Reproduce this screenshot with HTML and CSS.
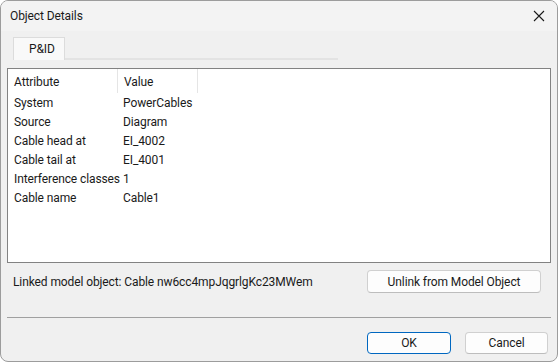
FILE: index.html
```html
<!DOCTYPE html>
<html lang="en">
<head>
    <meta charset="UTF-8">
    <title>Object Details</title>
    <link rel="stylesheet" href="styles.css">
</head>
<body>
    <div class="dialog">
        <div class="title-bar">
            <span class="title">Object Details</span>
            <svg class="close-icon" width="12" height="12" viewBox="0 0 12 12">
                <path d="M1 1 L11 11 M11 1 L1 11" stroke="#1a1a1a" stroke-width="1.1" fill="none"/>
            </svg>
        </div>

        <div class="tab-strip">
            <div class="tab">P&amp;ID</div>
            <div class="tab-line"></div>
        </div>

        <div class="attr-list">
            <div class="attr-row attr-head">
                <div class="col-name">Attribute</div>
                <div class="col-value">Value</div>
            </div>
            <div class="attr-row"><div class="col-name">System</div><div class="col-value">PowerCables</div></div>
            <div class="attr-row"><div class="col-name">Source</div><div class="col-value">Diagram</div></div>
            <div class="attr-row"><div class="col-name">Cable head at</div><div class="col-value">EI_4002</div></div>
            <div class="attr-row"><div class="col-name">Cable tail at</div><div class="col-value">EI_4001</div></div>
            <div class="attr-row"><div class="col-name">Interference classes</div><div class="col-value">1</div></div>
            <div class="attr-row"><div class="col-name">Cable name</div><div class="col-value">Cable1</div></div>
        </div>

        <div class="link-row">
            <span class="link-text">Linked model object: Cable nw6cc4mpJqgrlgKc23MWem</span>
            <button class="btn btn-unlink">Unlink from Model Object</button>
        </div>

        <div class="separator"></div>

        <div class="footer">
            <button class="btn btn-ok">OK</button>
            <button class="btn btn-cancel">Cancel</button>
        </div>
    </div>
</body>
</html>
```

FILE: styles.css
```css
body {
    margin: 0;
    padding: 0;
    background-color: #ffffff;
    font-family: Roboto, "Noto Sans", Arial, sans-serif;
    font-size: 12px;
    letter-spacing: -0.1px;
    color: #1a1a1a;
}

.dialog {
    box-sizing: border-box;
    width: 558px;
    height: 362px;
    display: flex;
    flex-direction: column;
    background-color: #f0f0f0;
    border: 1px solid #9c9c9c;
    border-radius: 8px;
    overflow: hidden;
}

.title-bar {
    height: 30px;
    flex-shrink: 0;
    display: flex;
    align-items: center;
    justify-content: space-between;
    padding: 0 12px 0 9px;
    box-sizing: border-box;
    background-color: #f3f3f3;
}

.title {
    color: #1a1a1a;
}

.close-icon {
    display: block;
}

.tab-strip {
    display: flex;
    align-items: flex-end;
    height: 23px;
    margin-top: 6px;
    padding-left: 12px;
}

.tab {
    box-sizing: border-box;
    width: 52px;
    height: 23px;
    padding-left: 15px;
    line-height: 22px;
    background-color: #f9f9f9;
    border: 1px solid #dcdcdc;
    border-bottom: none;
}

.tab-line {
    width: 273px;
    height: 2px;
    background-color: #e3e3e3;
}

.attr-list {
    box-sizing: border-box;
    height: 195px;
    margin: 8px 6px 0 6px;
    background-color: #ffffff;
    border: 1px solid #828282;
}

.attr-row {
    display: flex;
    height: 19px;
    line-height: 19px;
}

.attr-head {
    height: 24px;
    line-height: 26px;
    margin-bottom: 1px;
}

.col-name {
    width: 103px;
    padding-left: 6px;
    white-space: nowrap;
}

.col-value {
    width: 73px;
    padding-left: 6px;
    white-space: nowrap;
}

.attr-head .col-name,
.attr-head .col-value {
    border-right: 1px solid #e5e5e5;
}

.link-row {
    display: flex;
    align-items: center;
    justify-content: space-between;
    height: 23px;
    margin-top: 7px;
    padding: 0 16px 0 12px;
}

.btn {
    box-sizing: border-box;
    font-family: Roboto, "Noto Sans", Arial, sans-serif;
    font-size: 12px;
    letter-spacing: -0.1px;
    color: #1a1a1a;
    background-color: #fdfdfd;
    border: 1px solid #d0d0d0;
    border-bottom-color: #bdbdbd;
    border-radius: 4px;
    padding: 0;
}

.btn-unlink {
    width: 174px;
    height: 23px;
}

.separator {
    height: 1px;
    margin: 24px 6px 0 6px;
    background-color: #a0a0a0;
}

.footer {
    display: flex;
    justify-content: flex-end;
    gap: 14px;
    margin-top: 14px;
    padding-right: 9px;
}

.btn-ok {
    width: 84px;
    height: 22px;
    border: 1px solid #0067c0;
}

.btn-cancel {
    width: 83px;
    height: 22px;
}
```
